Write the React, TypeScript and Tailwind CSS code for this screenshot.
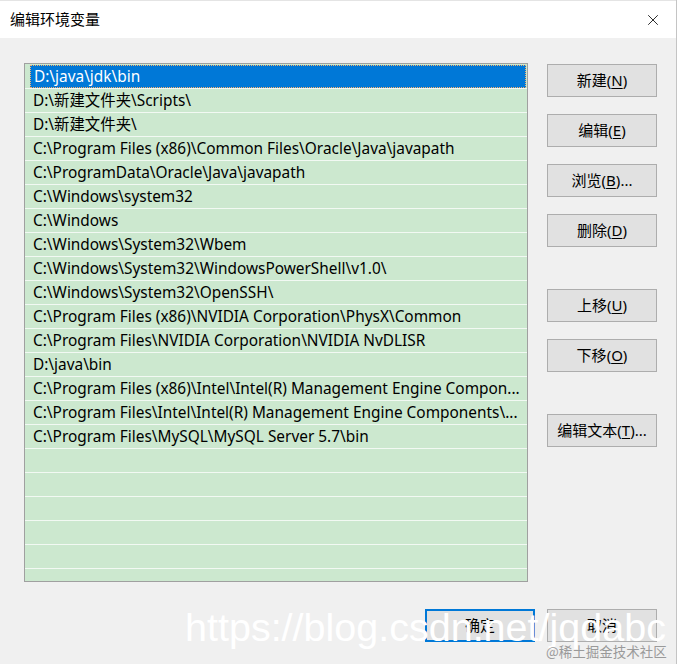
import { X } from 'lucide-react';

const paths = [
  'D:\\java\\jdk\\bin',
  'D:\\新建文件夹\\Scripts\\',
  'D:\\新建文件夹\\',
  'C:\\Program Files (x86)\\Common Files\\Oracle\\Java\\javapath',
  'C:\\ProgramData\\Oracle\\Java\\javapath',
  'C:\\Windows\\system32',
  'C:\\Windows',
  'C:\\Windows\\System32\\Wbem',
  'C:\\Windows\\System32\\WindowsPowerShell\\v1.0\\',
  'C:\\Windows\\System32\\OpenSSH\\',
  'C:\\Program Files (x86)\\NVIDIA Corporation\\PhysX\\Common',
  'C:\\Program Files\\NVIDIA Corporation\\NVIDIA NvDLISR',
  'D:\\java\\bin',
  'C:\\Program Files (x86)\\Intel\\Intel(R) Management Engine Compon...',
  'C:\\Program Files\\Intel\\Intel(R) Management Engine Components\\...',
  'C:\\Program Files\\MySQL\\MySQL Server 5.7\\bin',
];

const rows = [...paths, ...Array(6).fill('')];

const uiFont = "font-['Segoe_UI','Noto_Sans','Noto_Sans_CJK_SC',sans-serif]";

type BtnProps = { label: string; mnemonic: string; tail?: string; primary?: boolean; className?: string };

const WinButton = ({ label, mnemonic, tail = '', primary, className = '' }: BtnProps) => (
  <button
    className={`w-[110px] h-[33px] flex items-center justify-center bg-[#e1e1e1] text-[15px] text-black ${
      primary ? 'border-2 border-[#0078d7]' : 'border border-[#adadad]'
    } ${className}`}
  >
    {label}(<u className="underline-offset-2">{mnemonic}</u>){tail}
  </button>
);

export default function App() {
  return (
    <div className={`relative w-[677px] h-[664px] bg-[#f0f0f0] border-r border-[#c4c4c4] overflow-hidden ${uiFont}`}>
      {/* title bar */}
      <div className="h-[38px] bg-white border-t border-[#e4e4e4] flex items-center justify-between pl-[10px] pr-[14px]">
        <span className="text-[15px] text-black">编辑环境变量</span>
        <X className="w-[18px] h-[18px] text-black" strokeWidth={1.1} />
      </div>

      <div className="flex pl-[24px] pt-[25px]">
        {/* path list */}
        <div className="w-[504px] h-[519px] border border-[#a0a0a0] bg-[#cce8cf] overflow-hidden pt-px">
          {rows.map((p, i) => (
            <div key={i} className="h-[24px] border-b border-[#f2f9f3] flex">
              <div
                className={`h-[23px] ml-[5px] mr-px flex-1 flex items-center pl-[3px] text-[15.4px] whitespace-nowrap overflow-hidden ${
                  i === 0
                    ? 'bg-[#0078d7] text-white border border-dotted border-[#f5b070]'
                    : 'text-black'
                }`}
              >
                {p}
              </div>
            </div>
          ))}
        </div>

        {/* side buttons */}
        <div className="ml-[19px] pt-px flex flex-col gap-[17px]">
          <WinButton label="新建" mnemonic="N" />
          <WinButton label="编辑" mnemonic="E" />
          <WinButton label="浏览" mnemonic="B" tail="..." />
          <WinButton label="删除" mnemonic="D" />
          <WinButton label="上移" mnemonic="U" className="mt-[25px]" />
          <WinButton label="下移" mnemonic="O" />
          <WinButton label="编辑文本" mnemonic="T" tail="..." className="mt-[25px]" />
        </div>
      </div>

      {/* footer */}
      <div className="flex justify-end gap-[12px] pr-[19px] pt-[27px]">
        <button className="w-[110px] h-[33px] flex items-center justify-center bg-[#e1e1e1] border-2 border-[#0078d7] text-[15px] text-black">
          确定
        </button>
        <button className="w-[110px] h-[33px] flex items-center justify-center bg-[#e1e1e1] border border-[#adadad] text-[15px] text-black">
          取消
        </button>
      </div>

      {/* watermarks */}
      <div className="absolute left-[185px] top-[603px] text-[39.5px] leading-[48px] text-white font-['Liberation_Sans',Arial,sans-serif] whitespace-nowrap">
        https://blog.csdn.net/jqdabc
      </div>
      <div className="absolute left-[546px] top-[642px] text-[13.5px] leading-[18px] text-[#9a9a9a] font-['Noto_Sans_CJK_SC',sans-serif] whitespace-nowrap">
        @稀土掘金技术社区
      </div>
    </div>
  );
}
